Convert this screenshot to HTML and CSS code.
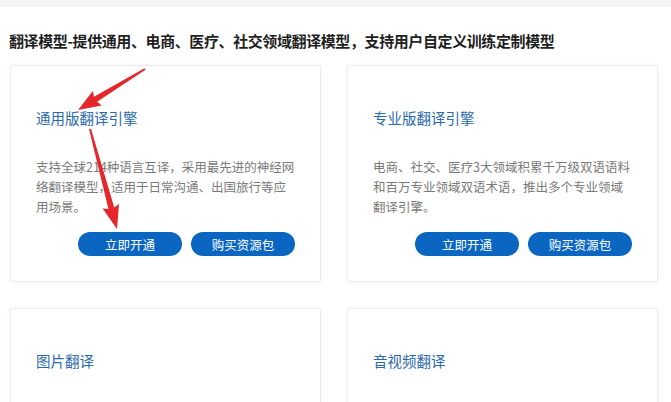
FILE: index.html
```html
<!DOCTYPE html>
<html lang="zh-CN">
<head>
<meta charset="utf-8">
<link rel="stylesheet" href="styles.css">
</head>
<body>
<div class="topbar"></div>
<main class="page">
  <h2 class="heading">翻译模型-提供通用、电商、医疗、社交领域翻译模型，支持用户自定义训练定制模型</h2>
  <div class="grid">
    <div class="card">
      <div class="card-title">通用版翻译引擎</div>
      <p class="card-desc">支持全球214种语言互译，采用最先进的神经网络翻译模型，适用于日常沟通、出国旅行等应用场景。</p>
      <div class="actions">
        <a class="btn">立即开通</a>
        <a class="btn">购买资源包</a>
      </div>
    </div>
    <div class="card">
      <div class="card-title">专业版翻译引擎</div>
      <p class="card-desc">电商、社交、医疗3大领域积累千万级双语语料和百万专业领域双语术语，推出多个专业领域翻译引擎。</p>
      <div class="actions">
        <a class="btn">立即开通</a>
        <a class="btn">购买资源包</a>
      </div>
    </div>
    <div class="card">
      <div class="card-title">图片翻译</div>
      <p class="card-desc">&nbsp;</p>
    </div>
    <div class="card">
      <div class="card-title">音视频翻译</div>
      <p class="card-desc">&nbsp;</p>
    </div>
  </div>
</main>
<svg class="annot" width="671" height="402" viewBox="0 0 671 402">
  <g transform="translate(145,69) rotate(148.5)">
    <polygon class="arrow" points="0,-1 58,-3 56,-8.5 78.5,0 56,8.5 58,3 0,1"/>
  </g>
  <g transform="translate(90,129) rotate(74.9)">
    <polygon class="arrow" points="0,-1 82,-3 80,-8.5 103.6,0 80,8.5 82,3 0,1"/>
  </g>
</svg>
</body>
</html>
```
FILE: styles.css
```css
html, body {
  margin: 0;
  padding: 0;
  background: #ffffff;
  font-family: "Noto Sans CJK SC", "Noto Sans", sans-serif;
}
.topbar {
  height: 7px;
  background: #f4f4f4;
}
.page {
  padding: 0 9px;
}
.heading {
  margin: 0;
  padding-top: 23px;
  font-size: 15px;
  line-height: 22px;
  font-weight: bold;
  color: #1f1f1f;
  letter-spacing: -0.4px;
}
.grid {
  display: grid;
  grid-template-columns: 311px 311px;
  column-gap: 26px;
  row-gap: 26px;
  margin-top: 13px;
  padding-left: 1px;
}
.card {
  border: 1px solid #ececec;
  border-radius: 2px;
  box-shadow: 0 0 4px rgba(0, 0, 0, 0.05);
  padding: 42px 25px 25px;
  box-sizing: border-box;
  height: 217px;
  display: flex;
  flex-direction: column;
}
.card-title {
  font-size: 14.5px;
  line-height: 20px;
  color: #2a6aa8;
}
.card-desc {
  margin: 29px 0 0;
  width: 260px;
  font-size: 12.5px;
  line-height: 20px;
  color: #7a7a7a;
  height: 60px;
}
.actions {
  margin-top: 15px;
  display: flex;
  justify-content: flex-end;
  gap: 9px;
}
.btn {
  display: flex;
  align-items: center;
  justify-content: center;
  width: 104px;
  height: 24px;
  border-radius: 12px;
  background: #0b66c2;
  color: #ffffff;
  font-size: 12.5px;
  text-decoration: none;
}
.annot {
  position: absolute;
  left: 0;
  top: 0;
  pointer-events: none;
}
.arrow {
  fill: #e5262b;
}
```
